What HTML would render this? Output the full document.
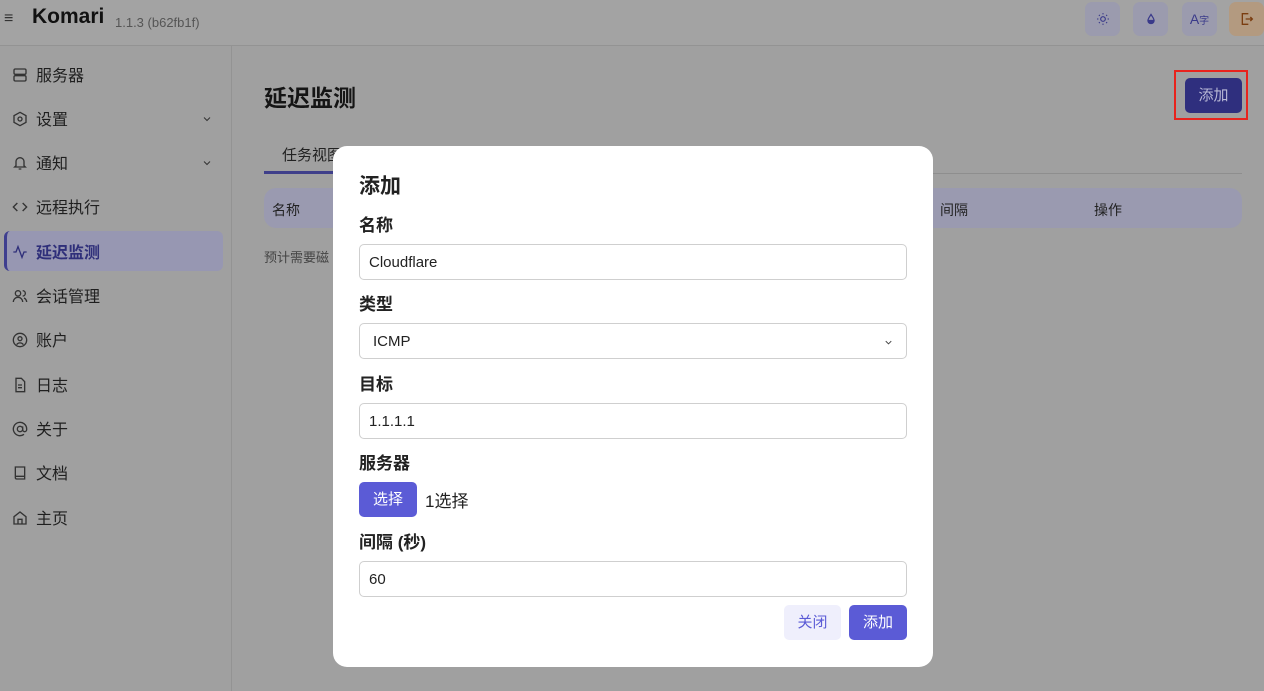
<!DOCTYPE html>
<html><head><meta charset="utf-8"><style>
*{box-sizing:border-box;margin:0;padding:0}
body{width:1264px;height:691px;overflow:hidden;background:#a0a0a0;font-family:"Liberation Sans","Noto Sans CJK SC",sans-serif;color:#1a1a1a;position:relative}
.hdr{position:absolute;left:0;top:0;width:1264px;height:46px;border-bottom:1px solid #939393;background:#a3a3a3}
.side{position:absolute;left:0;top:46px;width:232px;height:645px;border-right:1px solid #939393}
.item{position:absolute;left:4px;width:219px;height:40px;display:flex;align-items:center;font-size:16px;color:#1f1f1f}
.item svg{display:block;margin-left:8px;margin-right:8px;flex:none;position:relative;top:1px}
.item svg.chev{position:absolute;right:10px;left:auto;top:15px;margin:0}
.ib{position:absolute;top:2px;width:35px;height:34px;border-radius:7px;background:#9b9bae;display:flex;align-items:center;justify-content:center}
.ovl{position:absolute;left:333px;top:146px;width:600px;height:521px;background:#fff;border-radius:14px}
.lbl{position:absolute;left:26px;font-size:17px;font-weight:bold;color:#222}
.inp{position:absolute;left:26px;width:548px;height:36px;border:1px solid #cfcfcf;border-radius:5px;font-size:15px;padding-left:9px;line-height:35px;color:#222}
</style></head><body>
<div class="hdr">
<div style="position:absolute;left:4px;top:10px;font-size:16px;color:#333">≡</div>
<div style="position:absolute;left:32px;top:5px;font-size:21px;font-weight:bold;color:#111">Komari</div>
<div style="position:absolute;left:115px;top:15px;font-size:13px;color:#555">1.1.3 (b62fb1f)</div>
<div class="ib" style="left:1085px"><svg width="14" height="14" viewBox="0 0 24 24" fill="none" stroke="#3a3a8a" stroke-width="2"><circle cx="12" cy="12" r="4"/><path d="M12 2v2M12 20v2M2 12h2M20 12h2M5 5l1.5 1.5M17.5 17.5L19 19M5 19l1.5-1.5M17.5 6.5L19 5"/></svg></div>
<div class="ib" style="left:1133px"><svg width="12" height="14" viewBox="0 0 24 24" fill="none" stroke="#3a3a8a" stroke-width="2.5"><path d="M12 3C9 8 6 11 6 15a6 6 0 0012 0c0-4-3-7-6-12z"/><path d="M6 15h12a6 6 0 01-12 0z" fill="#3a3a8a"/></svg></div>
<div class="ib" style="left:1182px;font-size:14px;color:#3a3a8a">A<span style="font-size:10px;vertical-align:top">字</span></div>
<div class="ib" style="left:1229px;background:#b39a80"><svg width="16" height="16" viewBox="0 0 24 24" fill="none" stroke="#7a3d10" stroke-width="2"><path d="M14 4H5v16h9M10 12h10M17 9l3 3-3 3"/></svg></div>
</div>
<div class="side">
<div class="item" style="top:8px"><svg width="16" height="16" viewBox="0 0 24 24" fill="none" stroke="#333" stroke-width="2"><rect x="3" y="3" width="18" height="8" rx="2"/><rect x="3" y="13" width="18" height="8" rx="2"/></svg>服务器</div>
<div class="item" style="top:52px"><svg width="16" height="16" viewBox="0 0 24 24" fill="none" stroke="#333" stroke-width="2"><path d="M12 2l9 5v10l-9 5-9-5V7z"/><circle cx="12" cy="12" r="3"/></svg>设置<svg class="chev" width="12" height="12" viewBox="0 0 24 24" fill="none" stroke="#333" stroke-width="2"><path d="M6 9l6 6 6-6"/></svg></div>
<div class="item" style="top:96px"><svg width="16" height="16" viewBox="0 0 24 24" fill="none" stroke="#333" stroke-width="2"><path d="M6 16V10a6 6 0 0112 0v6l2 2H4zM10 21h4"/></svg>通知<svg class="chev" width="12" height="12" viewBox="0 0 24 24" fill="none" stroke="#333" stroke-width="2"><path d="M6 9l6 6 6-6"/></svg></div>
<div class="item" style="top:140px"><svg width="16" height="16" viewBox="0 0 24 24" fill="none" stroke="#333" stroke-width="2"><path d="M8 6l-6 6 6 6M16 6l6 6-6 6"/></svg>远程执行</div>
<div class="item" style="top:185px;background:#9797b2;border-radius:6px;border-left:3px solid #3f3f8f;color:#2f2f7a;font-weight:bold"><svg width="16" height="16" viewBox="0 0 24 24" fill="none" stroke="#2f2f7a" stroke-width="2" style="margin-left:5px"><path d="M2 12h4l3-8 6 16 3-8h4"/></svg>延迟监测</div>
<div class="item" style="top:229px"><svg width="16" height="16" viewBox="0 0 24 24" fill="none" stroke="#333" stroke-width="2"><circle cx="9" cy="8" r="4"/><path d="M2 21a7 7 0 0114 0M16 4a4 4 0 010 8M22 21a7 7 0 00-4-6"/></svg>会话管理</div>
<div class="item" style="top:273px"><svg width="16" height="16" viewBox="0 0 24 24" fill="none" stroke="#333" stroke-width="2"><circle cx="12" cy="12" r="10"/><circle cx="12" cy="10" r="3"/><path d="M7 19a6 6 0 0110 0"/></svg>账户</div>
<div class="item" style="top:318px"><svg width="16" height="16" viewBox="0 0 24 24" fill="none" stroke="#333" stroke-width="2"><path d="M6 2h8l5 5v15H6zM9 12h6M9 16h6"/></svg>日志</div>
<div class="item" style="top:362px"><svg width="16" height="16" viewBox="0 0 24 24" fill="none" stroke="#333" stroke-width="2"><circle cx="12" cy="12" r="4"/><path d="M16 8v5a3 3 0 006 0v-1a10 10 0 10-4 8"/></svg>关于</div>
<div class="item" style="top:406px"><svg width="16" height="16" viewBox="0 0 24 24" fill="none" stroke="#333" stroke-width="2"><path d="M5 3h14v18H7a2 2 0 01-2-2zM5 17h14"/></svg>文档</div>
<div class="item" style="top:451px"><svg width="16" height="16" viewBox="0 0 24 24" fill="none" stroke="#333" stroke-width="2"><path d="M3 10l9-7 9 7v11H3zM9 21v-7h6v7"/></svg>主页</div>
</div>
<div style="position:absolute;left:264px;top:79px;font-size:23px;font-weight:bold;color:#151515">延迟监测</div>
<div style="position:absolute;left:1174px;top:70px;width:74px;height:50px;border:2px solid #e8231d"></div>
<div style="position:absolute;left:1185px;top:78px;width:57px;height:35px;background:#2f2f7e;border-radius:5px;color:#b9b9d6;font-size:15px;text-align:center;line-height:35px">添加</div>
<div style="position:absolute;left:282px;top:144px;font-size:15px;color:#222">任务视图</div>
<div style="position:absolute;left:264px;top:173px;width:978px;height:1px;background:#8e8e8e"></div>
<div style="position:absolute;left:264px;top:171px;width:70px;height:3px;background:#3f3f8a"></div>
<div style="position:absolute;left:264px;top:188px;width:978px;height:40px;background:#9a9ab0;border-radius:12px;font-size:14px;color:#222">
<span style="position:absolute;left:8px;top:12px">名称</span><span style="position:absolute;left:676px;top:12px">间隔</span><span style="position:absolute;left:830px;top:12px">操作</span></div>
<div style="position:absolute;left:264px;top:247px;font-size:13px;color:#444">预计需要磁</div>
<div class="ovl">
<div class="lbl" style="top:24px;font-size:21px">添加</div>
<div class="lbl" style="top:65px">名称</div>
<div class="inp" style="top:98px">Cloudflare</div>
<div class="lbl" style="top:144px">类型</div>
<div class="inp" style="top:177px;padding-left:13px">ICMP<svg style="position:absolute;right:12px;top:13px" width="11" height="11" viewBox="0 0 24 24" fill="none" stroke="#444" stroke-width="2"><path d="M6 9l6 6 6-6"/></svg></div>
<div class="lbl" style="top:224px">目标</div>
<div class="inp" style="top:257px">1.1.1.1</div>
<div class="lbl" style="top:303px">服务器</div>
<div style="position:absolute;left:26px;top:336px;width:58px;height:35px;background:#5b5bd6;border-radius:5px;color:#fff;font-size:15px;text-align:center;line-height:35px">选择</div>
<div style="position:absolute;left:92px;top:341px;font-size:17px;color:#222">1选择</div>
<div class="lbl" style="top:382px">间隔 (秒)</div>
<div class="inp" style="top:415px">60</div>
<div style="position:absolute;left:451px;top:459px;width:57px;height:35px;background:#efeffc;border-radius:5px;color:#5b5bd6;font-size:15px;text-align:center;line-height:35px">关闭</div>
<div style="position:absolute;left:516px;top:459px;width:58px;height:35px;background:#5b5bd6;border-radius:5px;color:#fff;font-size:15px;text-align:center;line-height:35px">添加</div>
</div>
</body></html>
